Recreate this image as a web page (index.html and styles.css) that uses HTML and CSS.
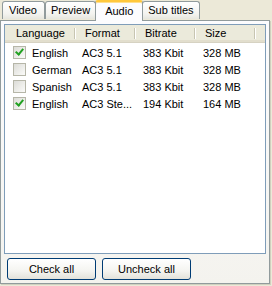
FILE: index.html
```html
<!DOCTYPE html>
<html>
<head>
<meta charset="utf-8">
<link rel="stylesheet" href="styles.css">
</head>
<body>
<div class="tabs">
  <div class="tabstrip">
    <div class="tab first">Video</div>
    <div class="tab">Preview</div>
    <div class="tab active">Audio</div>
    <div class="tab">Sub titles</div>
  </div>
  <div class="panel">
    <div class="list">
      <div class="head">
        <div class="hc c1">Language</div>
        <div class="hc c2">Format</div>
        <div class="hc c3">Bitrate</div>
        <div class="hc c4">Size</div>
      </div>
      <div class="rows">
        <div class="row">
          <div class="cell c1"><span class="cb on"></span>English</div>
          <div class="cell c2">AC3 5.1</div>
          <div class="cell c3">383 Kbit</div>
          <div class="cell c4">328 MB</div>
        </div>
        <div class="row">
          <div class="cell c1"><span class="cb"></span>German</div>
          <div class="cell c2">AC3 5.1</div>
          <div class="cell c3">383 Kbit</div>
          <div class="cell c4">328 MB</div>
        </div>
        <div class="row">
          <div class="cell c1"><span class="cb"></span>Spanish</div>
          <div class="cell c2">AC3 5.1</div>
          <div class="cell c3">383 Kbit</div>
          <div class="cell c4">328 MB</div>
        </div>
        <div class="row">
          <div class="cell c1"><span class="cb on"></span>English</div>
          <div class="cell c2">AC3 Ste...</div>
          <div class="cell c3">194 Kbit</div>
          <div class="cell c4">164 MB</div>
        </div>
      </div>
    </div>
    <div class="buttons">
      <button class="btn">Check all</button>
      <button class="btn">Uncheck all</button>
    </div>
  </div>
</div>
</body>
</html>
```

FILE: styles.css
```css
html, body {
  margin: 0;
  padding: 0;
  background: #ece9d8;
  width: 272px;
  height: 286px;
  overflow: hidden;
  font-family: "Liberation Sans", Arial, sans-serif;
  font-size: 11px;
  color: #000;
}
.tabs {
  width: 270px;
  display: flex;
  flex-direction: column;
  height: 284px;
}
.tabstrip {
  display: flex;
  height: 20px;
  align-items: flex-end;
  padding-left: 2px;
  position: relative;
  z-index: 1;
}
.tab {
  height: 17px;
  line-height: 17px;
  padding: 0 5px;
  border: 1px solid #919b9c;
  border-bottom: none;
  border-radius: 3px 3px 0 0;
  background: linear-gradient(#ffffff, #f3f3ef 70%, #e6e6de);
  margin-bottom: 1px;
}
.tab.first { width: 29px; padding: 0 6px; }
.tab.active {
  line-height: 18px;
  margin-bottom: -1px;
  border-top: 2px solid #ffc83c;
  box-shadow: inset 0 1px 0 #ffdf8c;
  background: #fcfcfe;
  padding: 0 9px;
  height: 19px;
  margin-left: -1px;
  margin-right: -1px;
  position: relative;
  z-index: 2;
}
.panel {
  flex: 1;
  border: 1px solid #919b9c;
  background: linear-gradient(#fcfcfe, #f4f3ee);
  box-shadow: 1px 1px 0 #d0d0bf;
  display: flex;
  flex-direction: column;
  padding: 3px 3px 2px 3px;
}
.list {
  height: 228px;
  border: 1px solid #7f9db9;
  background: #fff;
}
.head {
  display: flex;
  height: 17px;
  background: #ebeadb;
  border-bottom: 1px solid #d6d2c2;
  box-shadow: inset 0 -2px 0 #e2decd;
}
.hc {
  line-height: 17px;
  padding-left: 10px;
  position: relative;
  box-sizing: border-box;
}
.hc::after {
  content: "";
  position: absolute;
  right: 0;
  top: 3px;
  width: 1px;
  height: 11px;
  background: #c7c5b2;
  box-shadow: 1px 0 0 #fff;
}
.hc.c1 { padding-left: 11px; }
.c1 { width: 70px; }
.c2 { width: 60px; }
.c3 { width: 60px; }
.c4 { width: 60px; }
.rows {
  padding-top: 1px;
}
.row {
  display: flex;
  height: 17px;
  align-items: center;
}
.cell {
  white-space: nowrap;
  box-sizing: border-box;
}
.cell.c1 { padding-left: 8px; display: flex; align-items: center; }
.row .c2 { padding-left: 7px; }
.row .c3 { padding-left: 8px; }
.row .c4 { padding-left: 8px; }
.cb {
  width: 11px;
  height: 11px;
  border: 1px solid #b6b6a8;
  background: linear-gradient(135deg, #dcdcd7, #fbfbf9);
  margin-right: 6px;
  position: relative;
  flex: none;
}
.cb.on::after {
  content: "";
  position: absolute;
  left: 3px;
  top: 0px;
  width: 3px;
  height: 6px;
  border: solid #21a121;
  border-width: 0 2px 2px 0;
  transform: rotate(40deg);
}
.buttons {
  display: flex;
  gap: 6px;
  padding: 4px 0 0 3px;
}
.btn {
  width: 89px;
  height: 22px;
  border: 1px solid #003c74;
  border-radius: 3px;
  background: linear-gradient(#ffffff, #f4f4f0 60%, #e3e2da);
  font-family: "Liberation Sans", Arial, sans-serif;
  font-size: 11px;
  color: #000;
  padding: 0;
}
```
